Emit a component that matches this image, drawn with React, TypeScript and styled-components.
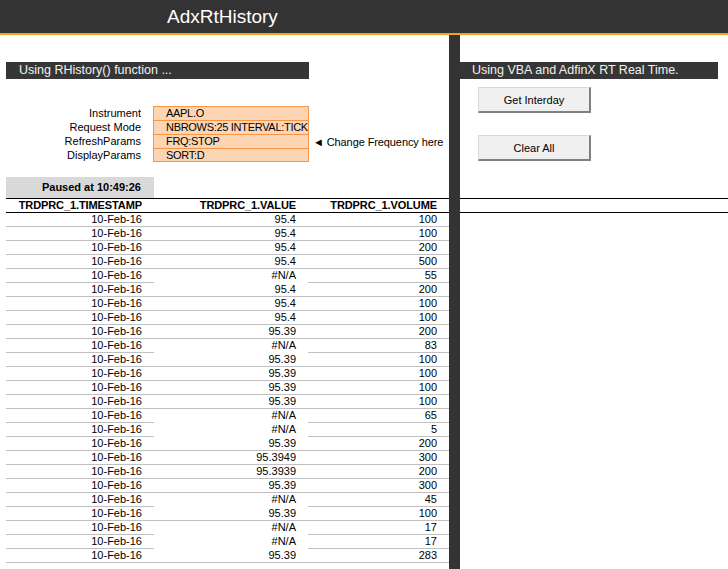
import { Fragment } from 'react';
import styled, { createGlobalStyle } from 'styled-components';

const GlobalStyle = createGlobalStyle`
  html, body {
    margin: 0;
    padding: 0;
    background: #fff;
    font-family: 'Liberation Sans', Arial, sans-serif;
    color: #000;
  }
`;

interface Tick {
  value: string;
  volume: number;
}

const ticks: Tick[] = [
  { value: '95.4', volume: 100 },
  { value: '95.4', volume: 100 },
  { value: '95.4', volume: 200 },
  { value: '95.4', volume: 500 },
  { value: '#N/A', volume: 55 },
  { value: '95.4', volume: 200 },
  { value: '95.4', volume: 100 },
  { value: '95.4', volume: 100 },
  { value: '95.39', volume: 200 },
  { value: '#N/A', volume: 83 },
  { value: '95.39', volume: 100 },
  { value: '95.39', volume: 100 },
  { value: '95.39', volume: 100 },
  { value: '95.39', volume: 100 },
  { value: '#N/A', volume: 65 },
  { value: '#N/A', volume: 5 },
  { value: '95.39', volume: 200 },
  { value: '95.3949', volume: 300 },
  { value: '95.3939', volume: 200 },
  { value: '95.39', volume: 300 },
  { value: '#N/A', volume: 45 },
  { value: '95.39', volume: 100 },
  { value: '#N/A', volume: 17 },
  { value: '#N/A', volume: 17 },
  { value: '95.39', volume: 283 }
];

const params = [
  { label: 'Instrument', value: 'AAPL.O' },
  { label: 'Request Mode', value: 'NBROWS:25 INTERVAL:TICK' },
  { label: 'RefreshParams', value: 'FRQ:STOP', note: '◄ Change Frequency here' },
  { label: 'DisplayParams', value: 'SORT:D' }
];

const Header = styled.header({
  height: '33px',
  backgroundColor: '#333333',
  borderBottom: '2px solid #f7a21b',
  display: 'flex',
  alignItems: 'center',
  paddingLeft: '167px',
  color: '#fff',
  fontSize: '19px'
});

const Main = styled.main({
  display: 'flex',
  minHeight: 'calc(100vh - 35px)'
});

const LeftPanel = styled.section({
  width: '449px',
  display: 'flex',
  flexDirection: 'column'
});

const Divider = styled.div({
  width: '11px',
  backgroundColor: '#333333'
});

const RightPanel = styled.section({
  flex: 1,
  display: 'flex',
  flexDirection: 'column'
});

const SectionBar = styled.div<{ $left: number; $width: number; $pad: number }>((p) => ({
  marginTop: '27px',
  marginLeft: `${p.$left}px`,
  width: `${p.$width}px`,
  height: '17px',
  boxSizing: 'border-box',
  paddingLeft: `${p.$pad}px`,
  backgroundColor: '#363636',
  color: '#f2f2f2',
  fontSize: '12.5px',
  lineHeight: '17px'
}));

const ParamGrid = styled.div({
  marginTop: '27px',
  display: 'grid',
  gridTemplateColumns: '153px 156px auto',
  gridAutoRows: '14px',
  fontSize: '11px',
  lineHeight: '14px'
});

const ParamLabel = styled.div({
  textAlign: 'right',
  paddingRight: '12px'
});

const ParamValue = styled.div<{ $last: boolean }>((p) => ({
  backgroundColor: '#fcd5b4',
  border: '1px solid #f79646',
  borderBottomWidth: p.$last ? '1px' : '0',
  paddingLeft: '12px',
  lineHeight: '13px',
  height: '14px',
  boxSizing: 'border-box',
  whiteSpace: 'nowrap',
  overflow: 'hidden',
  letterSpacing: '-0.3px'
}));

const ParamNote = styled.div({
  paddingLeft: '4px',
  whiteSpace: 'nowrap',
  lineHeight: '16px',
  letterSpacing: '-0.1px'
});

const PausedBox = styled.div({
  marginTop: '15px',
  marginLeft: '6px',
  width: '148px',
  height: '21px',
  boxSizing: 'border-box',
  backgroundColor: '#d9d9d9',
  fontSize: '11px',
  fontWeight: 'bold',
  textAlign: 'right',
  paddingRight: '13px',
  lineHeight: '20px'
});

const Table = styled.div({
  marginLeft: '6px',
  display: 'grid',
  gridTemplateColumns: '148px 154px 141px',
  fontSize: '11px'
});

const HeadCell = styled.div({
  height: '15px',
  boxSizing: 'border-box',
  borderTop: '1px solid #000',
  borderBottom: '1px solid #000',
  fontWeight: 'bold',
  textAlign: 'right',
  paddingRight: '12px',
  lineHeight: '13px',
  letterSpacing: '-0.1px'
});

const Cell = styled.div<{ $open?: boolean }>((p) => ({
  height: '14px',
  boxSizing: 'border-box',
  borderBottom: p.$open ? '1px solid transparent' : '1px solid #c0c0c0',
  textAlign: 'right',
  paddingRight: '12px',
  lineHeight: '13px'
}));

const Button = styled.button<{ $top: number }>((p) => ({
  marginTop: `${p.$top}px`,
  marginLeft: '18px',
  width: '113px',
  height: '26px',
  boxSizing: 'border-box',
  backgroundColor: '#f0f0f0',
  borderTop: '1px solid #d8d8d8',
  borderLeft: '1px solid #d8d8d8',
  borderRight: '2px solid #808080',
  borderBottom: '2px solid #808080',
  fontFamily: "'Liberation Sans', Arial, sans-serif",
  fontSize: '11px',
  color: '#000',
  padding: 0
}));

const HeaderStrip = styled.div({
  marginTop: '37px',
  height: '15px',
  boxSizing: 'border-box',
  borderTop: '1px solid #000',
  borderBottom: '1px solid #000'
});

export default function App() {
  return (
    <>
      <GlobalStyle />
      <Header>AdxRtHistory</Header>
      <Main>
        <LeftPanel>
          <SectionBar $left={6} $width={303} $pad={13}>
            Using RHistory() function ...
          </SectionBar>
          <ParamGrid>
            {params.map((param, i) => (
              <Fragment key={param.label}>
                <ParamLabel>{param.label}</ParamLabel>
                <ParamValue $last={i === params.length - 1}>{param.value}</ParamValue>
                <ParamNote>{param.note}</ParamNote>
              </Fragment>
            ))}
          </ParamGrid>
          <PausedBox>Paused at 10:49:26</PausedBox>
          <Table>
            <HeadCell>TRDPRC_1.TIMESTAMP</HeadCell>
            <HeadCell>TRDPRC_1.VALUE</HeadCell>
            <HeadCell>TRDPRC_1.VOLUME</HeadCell>
            {ticks.map((tick, i) => (
              <Fragment key={i}>
                <Cell>10-Feb-16</Cell>
                <Cell $open={tick.value === '#N/A'}>{tick.value}</Cell>
                <Cell>{tick.volume}</Cell>
              </Fragment>
            ))}
          </Table>
        </LeftPanel>
        <Divider />
        <RightPanel>
          <SectionBar $left={0} $width={258} $pad={12}>
            Using VBA and AdfinX RT Real Time.
          </SectionBar>
          <Button $top={8}>Get Interday</Button>
          <Button $top={22}>Clear All</Button>
          <HeaderStrip />
        </RightPanel>
      </Main>
    </>
  );
}
